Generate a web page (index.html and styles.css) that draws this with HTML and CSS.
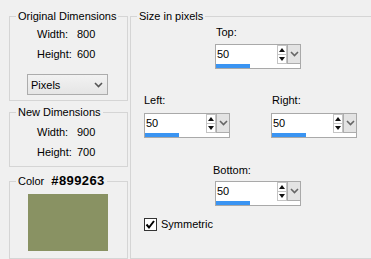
FILE: index.html
```html
<!DOCTYPE html>
<html lang="en">
<head>
    <meta charset="UTF-8">
    <title>Add Borders</title>
    <link rel="stylesheet" href="styles.css">
</head>
<body>

    <div class="dialog">
        <div class="left-col">

            <!-- Original size -->
            <fieldset class="group group-orig">
                <legend>Original Dimensions</legend>
                <div class="dims">
                    <span>Width:</span><span>800</span>
                    <span>Height:</span><span>600</span>
                </div>
                <div class="select">
                    <span>Pixels</span>
                    <svg width="9" height="6" viewBox="0 0 9 6"><polyline points="1,1 4.5,4.5 8,1" fill="none" stroke="#555" stroke-width="1.6"/></svg>
                </div>
            </fieldset>

            <!-- New size -->
            <fieldset class="group group-new">
                <legend>New Dimensions</legend>
                <div class="dims">
                    <span>Width:</span><span>900</span>
                    <span>Height:</span><span>700</span>
                </div>
            </fieldset>

            <!-- Border colour -->
            <fieldset class="group group-color">
                <legend>Color<b class="hex">#899263</b></legend>
                <div class="swatch"></div>
            </fieldset>
        </div>

        <fieldset class="group group-size">
            <legend>Size in pixels</legend>

            <div class="row-top">
                <div class="field">
                    <div class="field-label">Top:</div>
                    <div class="spin">
                        <div class="spin-main">
                            <span class="spin-value">50</span>
                            <svg class="spin-arrows" width="10" height="19" viewBox="0 0 10 19">
                                <rect x="0.5" y="0.5" width="9" height="18" fill="#fff" stroke="#c4c4c4"/>
                                <line x1="1" y1="9.5" x2="9" y2="9.5" stroke="#c4c4c4"/>
                                <polygon points="2,7 8,7 5,3" fill="#111"/>
                                <polygon points="2,12 8,12 5,16" fill="#111"/>
                            </svg>
                            <span class="spin-drop"><svg width="9" height="6" viewBox="0 0 9 6"><polyline points="1,1 4.5,4.5 8,1" fill="none" stroke="#666" stroke-width="1.6"/></svg></span>
                        </div>
                        <div class="spin-bar"><div class="spin-fill" style="width: 40%"></div></div>
                    </div>
                </div>
            </div>

            <div class="row-mid">
                <div class="field">
                    <div class="field-label">Left:</div>
                    <div class="spin">
                        <div class="spin-main">
                            <span class="spin-value">50</span>
                            <svg class="spin-arrows" width="10" height="19" viewBox="0 0 10 19">
                                <rect x="0.5" y="0.5" width="9" height="18" fill="#fff" stroke="#c4c4c4"/>
                                <line x1="1" y1="9.5" x2="9" y2="9.5" stroke="#c4c4c4"/>
                                <polygon points="2,7 8,7 5,3" fill="#111"/>
                                <polygon points="2,12 8,12 5,16" fill="#111"/>
                            </svg>
                            <span class="spin-drop"><svg width="9" height="6" viewBox="0 0 9 6"><polyline points="1,1 4.5,4.5 8,1" fill="none" stroke="#666" stroke-width="1.6"/></svg></span>
                        </div>
                        <div class="spin-bar"><div class="spin-fill" style="width: 40%"></div></div>
                    </div>
                </div>
                <div class="field field-right">
                    <div class="field-label">Right:</div>
                    <div class="spin">
                        <div class="spin-main">
                            <span class="spin-value">50</span>
                            <svg class="spin-arrows" width="10" height="19" viewBox="0 0 10 19">
                                <rect x="0.5" y="0.5" width="9" height="18" fill="#fff" stroke="#c4c4c4"/>
                                <line x1="1" y1="9.5" x2="9" y2="9.5" stroke="#c4c4c4"/>
                                <polygon points="2,7 8,7 5,3" fill="#111"/>
                                <polygon points="2,12 8,12 5,16" fill="#111"/>
                            </svg>
                            <span class="spin-drop"><svg width="9" height="6" viewBox="0 0 9 6"><polyline points="1,1 4.5,4.5 8,1" fill="none" stroke="#666" stroke-width="1.6"/></svg></span>
                        </div>
                        <div class="spin-bar"><div class="spin-fill" style="width: 40%"></div></div>
                    </div>
                </div>
            </div>

            <div class="row-bottom">
                <div class="field">
                    <div class="field-label">Bottom:</div>
                    <div class="spin">
                        <div class="spin-main">
                            <span class="spin-value">50</span>
                            <svg class="spin-arrows" width="10" height="19" viewBox="0 0 10 19">
                                <rect x="0.5" y="0.5" width="9" height="18" fill="#fff" stroke="#c4c4c4"/>
                                <line x1="1" y1="9.5" x2="9" y2="9.5" stroke="#c4c4c4"/>
                                <polygon points="2,7 8,7 5,3" fill="#111"/>
                                <polygon points="2,12 8,12 5,16" fill="#111"/>
                            </svg>
                            <span class="spin-drop"><svg width="9" height="6" viewBox="0 0 9 6"><polyline points="1,1 4.5,4.5 8,1" fill="none" stroke="#666" stroke-width="1.6"/></svg></span>
                        </div>
                        <div class="spin-bar"><div class="spin-fill" style="width: 40%"></div></div>
                    </div>
                </div>
            </div>

            <label class="check">
                <svg width="13" height="13" viewBox="0 0 13 13">
                    <rect x="0.5" y="0.5" width="12" height="12" fill="#fff" stroke="#333"/>
                    <polyline points="2.5,6.5 5,9.5 10,3" fill="none" stroke="#000" stroke-width="2"/>
                </svg>
                <span>Symmetric</span>
            </label>
        </fieldset>
    </div>

</body>
</html>
```

FILE: styles.css
```css
body {
    margin: 0;
    background-color: #f0f0f0;
    font-family: "Liberation Sans", Arial, sans-serif;
    font-size: 11px;
    color: #000;
    overflow: hidden;
}

.dialog {
    display: flex;
    align-items: stretch;
    padding: 10px 0 0 9px;
}

/* Group boxes */
.group {
    margin: 0;
    padding: 0;
    min-width: 0;
    border: 1px solid #d5d5d5;
}

.group legend {
    margin-left: 6px;
    padding: 0 2px;
    line-height: 13px;
    white-space: nowrap;
}

.left-col {
    display: flex;
    flex-direction: column;
    width: 119px;
    flex: none;
    margin-right: 2px;
}

.group-new { margin-top: 5px; }
.group-color { margin-top: 7px; }

.dims {
    display: grid;
    grid-template-columns: 40px auto;
    row-gap: 7px;
    line-height: 13px;
    margin-left: 27px;
    padding-top: 5px;
}

.group-new .dims {
    padding: 7px 0 7px 0;
}

/* Units dropdown */
.select {
    box-sizing: border-box;
    width: 81px;
    height: 21px;
    margin: 13px 0 5px 17px;
    padding: 0 4px 0 3px;
    border: 1px solid #acacac;
    background: linear-gradient(#f2f2f2, #e5e5e5);
    display: flex;
    align-items: center;
    justify-content: space-between;
}

.hex {
    margin-left: 7px;
    font-size: 13px;
    letter-spacing: 0.4px;
    line-height: 13px;
}

.swatch {
    width: 80px;
    height: 57px;
    margin: 6px 0 7px 18px;
    background-color: #899263;
}

/* Size in pixels: runs off the right edge, so no right border */
.group-size {
    width: 241px;
    flex: none;
    border-right: none;
}

.field {
    width: 86px;
}

.field-label {
    line-height: 13px;
}

.row-top {
    padding-top: 3px;
    margin-left: 84px;
}

.row-top .field-label { margin: 0 0 5px 1px; }

.row-mid {
    display: flex;
    gap: 41px;
    margin: 25px 0 0 13px;
}

.row-mid .field-label { margin-bottom: 6px; }
.row-mid .field-right .field-label { margin-left: 1px; }

.row-bottom {
    margin: 26px 0 0 84px;
}

.row-bottom .field-label { margin: 0 0 4px -2px; }

/* Spin edit with slider bar */
.spin {
    box-sizing: border-box;
    width: 86px;
    border: 1px solid #a9a9a9;
    background: #fff;
}

.spin-main {
    display: flex;
    height: 19px;
}

.spin-value {
    flex: 1;
    padding-left: 1px;
    line-height: 19px;
}

.spin-arrows {
    display: block;
}

.spin-drop {
    width: 13px;
    box-sizing: border-box;
    border-left: 1px solid #adadad;
    border-bottom: 1px solid #adadad;
    background: #e3e3e3;
    display: flex;
    align-items: center;
    justify-content: center;
}

.spin-bar {
    height: 4px;
    background: #fff;
}

.spin-fill {
    height: 4px;
    background: #3a94f2;
}

.check {
    display: flex;
    align-items: center;
    gap: 4px;
    margin: 12px 0 0 13px;
    line-height: 13px;
}

.check svg {
    display: block;
}
```
